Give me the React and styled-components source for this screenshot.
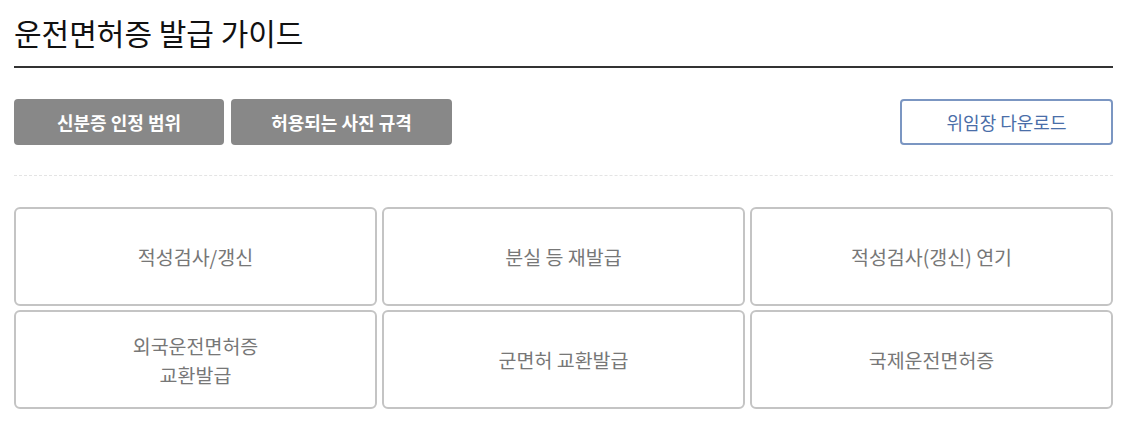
import React from "react";
import styled, { createGlobalStyle } from "styled-components";

const GlobalStyle = createGlobalStyle`
    body {
        margin: 0;
        background: #fff;
        font-family: "Noto Sans CJK KR", "Noto Sans", sans-serif;
    }
`;

const guides = [
    "적성검사/갱신",
    "분실 등 재발급",
    "적성검사(갱신) 연기",
    ["외국운전면허증", "교환발급"],
    "군면허 교환발급",
    "국제운전면허증",
];

export default function App() {
    return (
        <>
            <GlobalStyle />
            <Page>
                <Title>운전면허증 발급 가이드</Title>
                <Toolbar>
                    <ButtonGroup>
                        <GrayButton $width={210}>신분증 인정 범위</GrayButton>
                        <GrayButton $width={221}>허용되는 사진 규격</GrayButton>
                    </ButtonGroup>
                    <OutlineButton>위임장 다운로드</OutlineButton>
                </Toolbar>
                <Divider />
                <CardGrid>
                    {guides.map((g, i) => (
                        <Card key={i}>
                            {Array.isArray(g)
                                ? g.map((line) => <Line key={line}>{line}</Line>)
                                : g}
                        </Card>
                    ))}
                </CardGrid>
            </Page>
        </>
    );
}

const Page = styled.div`
    width: 1099px;
    margin-left: 14px;
`;

const Title = styled.h2`
    margin: 0;
    padding: 12px 0 14px;
    font-size: 30px;
    font-weight: 400;
    line-height: 40px;
    color: #111;
    border-bottom: 2px solid #333;
`;

const Toolbar = styled.div`
    display: flex;
    justify-content: space-between;
    align-items: center;
    margin-top: 31px;
`;

const ButtonGroup = styled.div`
    display: flex;
    gap: 7px;
`;

const GrayButton = styled.button`
    width: ${(p) => p.$width}px;
    height: 46px;
    border: 0;
    border-radius: 4px;
    background: #888;
    color: #fff;
    font-family: inherit;
    font-size: 18px;
    font-weight: 700;
    cursor: pointer;
`;

const OutlineButton = styled.button`
    width: 213px;
    height: 46px;
    border: 2px solid #7b96c2;
    border-radius: 4px;
    background: #fff;
    color: #4a6ea8;
    font-family: inherit;
    font-size: 18px;
    cursor: pointer;
`;

const Divider = styled.hr`
    margin: 30px 0 0;
    border: 0;
    border-top: 1px dashed #e4e4e4;
`;

const CardGrid = styled.div`
    display: grid;
    grid-template-columns: repeat(3, 1fr);
    gap: 4px 5px;
    margin-top: 31px;
`;

const Card = styled.div`
    display: flex;
    flex-direction: column;
    justify-content: center;
    align-items: center;
    height: 99px;
    box-sizing: border-box;
    border: 2px solid #c4c4c4;
    border-radius: 6px;
    color: #777;
    font-size: 19.5px;
    line-height: 29px;
    text-align: center;
`;

const Line = styled.span`
    display: block;
`;
